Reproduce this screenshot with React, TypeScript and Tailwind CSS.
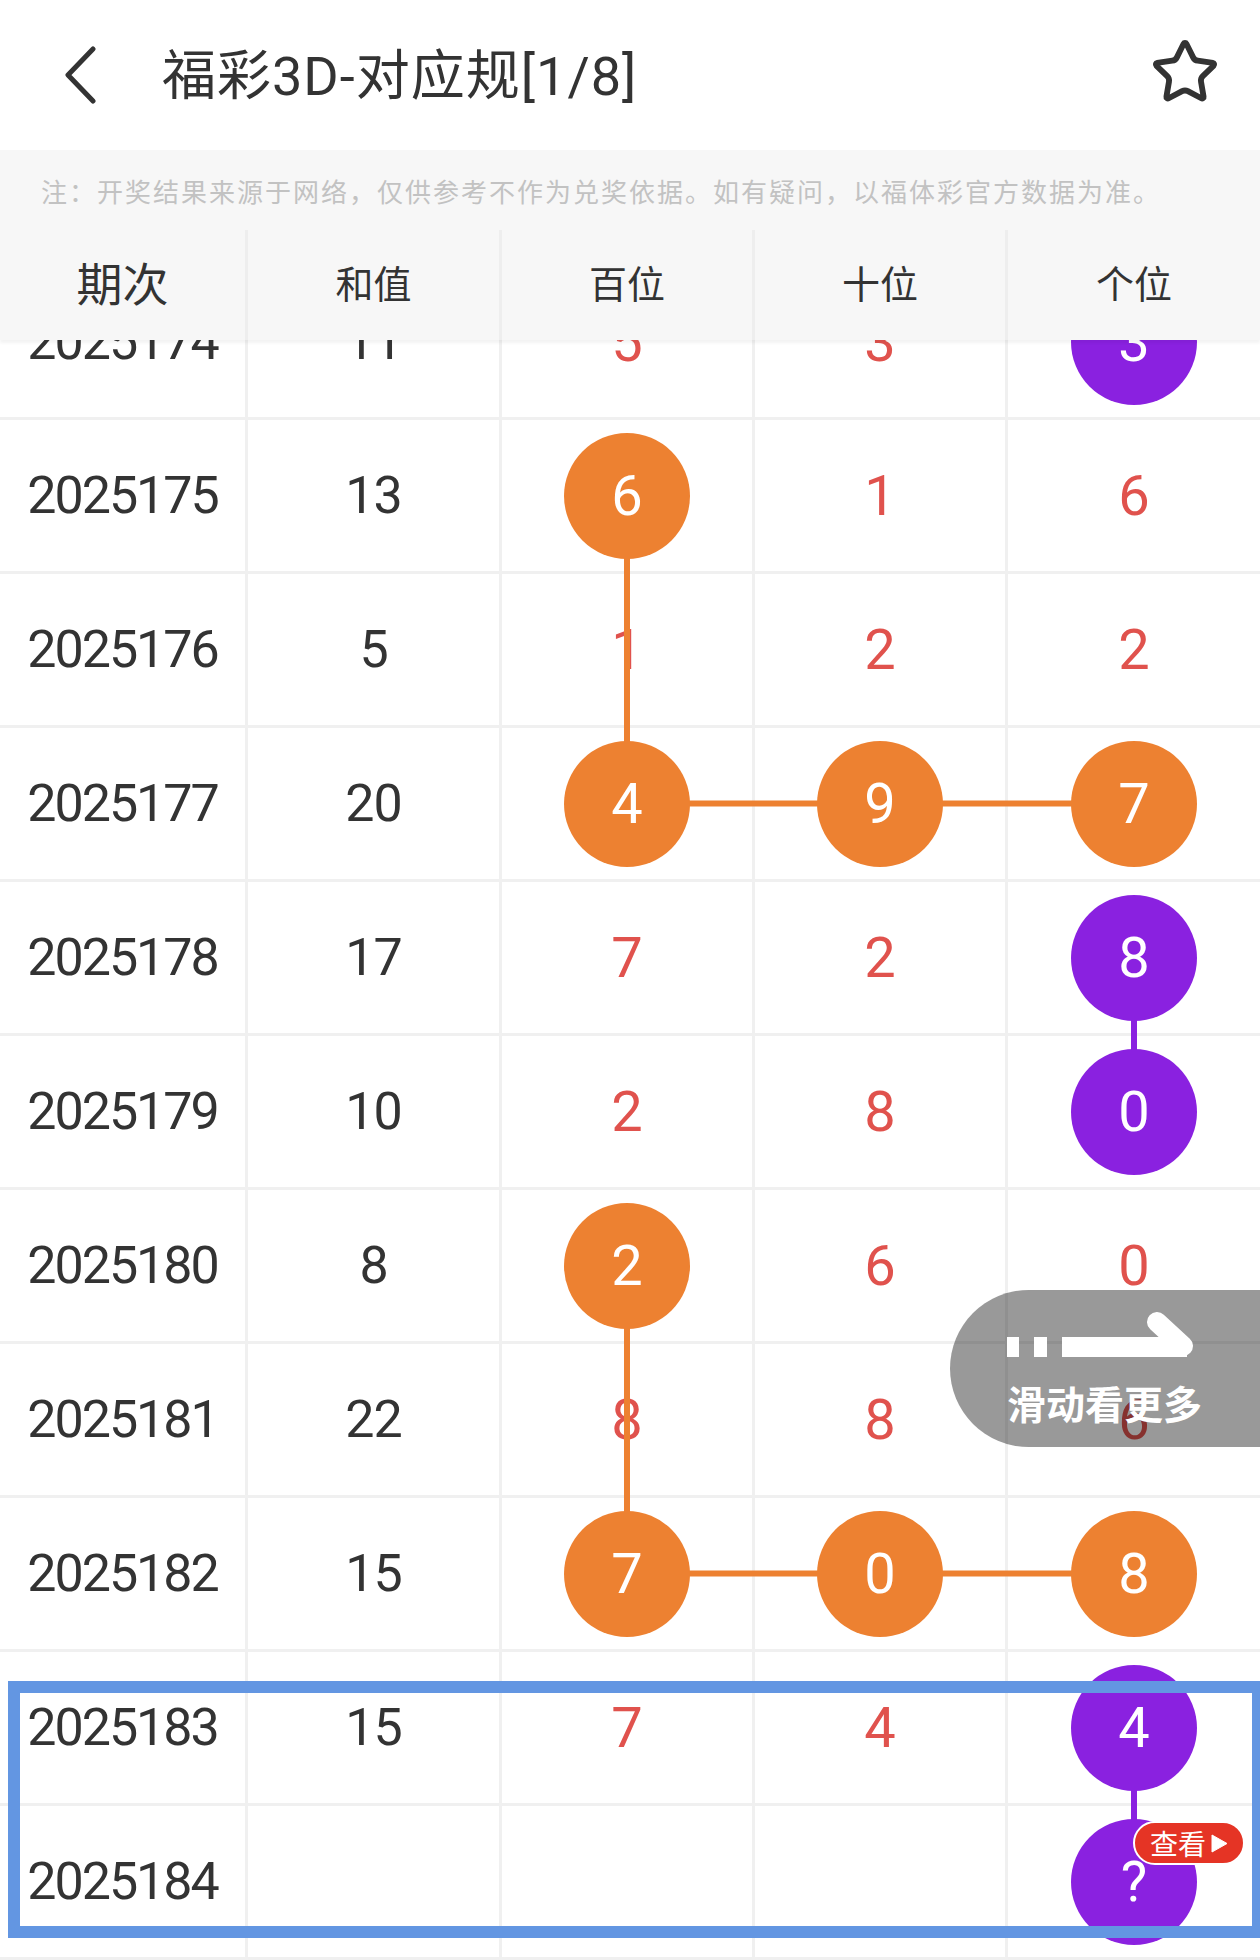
import React from "react";
import { Star } from "lucide-react";

type Cell = { v: string; c?: "o" | "p" };
type Row = { id: string; sum: string; cells: Cell[] };

const rows: Row[] = [
  { id: "2025174", sum: "11", cells: [{ v: "5" }, { v: "3" }, { v: "3", c: "p" }] },
  { id: "2025175", sum: "13", cells: [{ v: "6", c: "o" }, { v: "1" }, { v: "6" }] },
  { id: "2025176", sum: "5", cells: [{ v: "1" }, { v: "2" }, { v: "2" }] },
  { id: "2025177", sum: "20", cells: [{ v: "4", c: "o" }, { v: "9", c: "o" }, { v: "7", c: "o" }] },
  { id: "2025178", sum: "17", cells: [{ v: "7" }, { v: "2" }, { v: "8", c: "p" }] },
  { id: "2025179", sum: "10", cells: [{ v: "2" }, { v: "8" }, { v: "0", c: "p" }] },
  { id: "2025180", sum: "8", cells: [{ v: "2", c: "o" }, { v: "6" }, { v: "0" }] },
  { id: "2025181", sum: "22", cells: [{ v: "8" }, { v: "8" }, { v: "6" }] },
  { id: "2025182", sum: "15", cells: [{ v: "7", c: "o" }, { v: "0", c: "o" }, { v: "8", c: "o" }] },
  { id: "2025183", sum: "15", cells: [{ v: "7" }, { v: "4" }, { v: "4", c: "p" }] },
  { id: "2025184", sum: "", cells: [{ v: "" }, { v: "" }, { v: "?", c: "p" }] },
];

const cy = (i: number) => 75.5 + 154 * i;
const X2 = 627;
const X4 = 1134;

function Ball({ cell }: { cell: Cell }) {
  const bg = cell.c === "o" ? "bg-[#ED8131]" : "bg-[#8A21E0]";
  return (
    <div
      className={`relative z-20 flex h-[126px] w-[126px] items-center justify-center rounded-full text-[56px] leading-none text-white ${bg}`}
    >
      {cell.v}
    </div>
  );
}

export default function App() {
  return (
    <div
      className="relative h-[1960px] w-[1260px] overflow-hidden bg-white text-[#333333]"
      style={{ fontFamily: 'Roboto, "Noto Sans CJK SC", sans-serif' }}
    >
      {/* Top bar */}
      <div className="flex h-[150px] items-center">
        <svg className="ml-[64px] shrink-0" width="34" height="58" viewBox="0 0 34 58">
          <polyline
            points="29,3 4,29 29,55"
            fill="none"
            stroke="#333333"
            strokeWidth="5"
            strokeLinecap="round"
            strokeLinejoin="round"
          />
        </svg>
        <div className="ml-[64px] mt-[4px] text-[54px] leading-none tracking-[1px] text-[#333333]">
          福彩3D-对应规[1/8]
        </div>
        <div className="ml-auto mr-[40px] -mt-[6px]">
          <Star size={70} strokeWidth={2} color="#333333" />
        </div>
      </div>

      {/* Notice */}
      <div
        className="flex h-[80px] items-center bg-[#f7f7f7] pl-[41px] text-[26px] tracking-[2px] text-[#c2c2c2]"
        style={{ fontFamily: '"Noto Sans CJK SC", sans-serif' }}
      >
        注：开奖结果来源于网络，仅供参考不作为兑奖依据。如有疑问，以福体彩官方数据为准。
      </div>

      {/* Table header */}
      <div
        className="relative z-30 grid h-[110px] grid-cols-[248px_254px_253px_253px_252px] bg-[#f7f7f7] shadow-[0_3px_3px_rgba(0,0,0,0.05)]"
        style={{ fontFamily: '"Noto Sans CJK SC", sans-serif' }}
      >
        <div className="flex items-center justify-center border-r-[3px] border-[#eeeeee] pb-[8px] text-[46px]">期次</div>
        <div className="flex items-center justify-center border-r-[3px] border-[#eeeeee] pb-[8px] text-[38px]">和值</div>
        <div className="flex items-center justify-center border-r-[3px] border-[#eeeeee] pb-[8px] text-[38px]">百位</div>
        <div className="flex items-center justify-center border-r-[3px] border-[#eeeeee] pb-[8px] text-[38px]">十位</div>
        <div className="flex items-center justify-center pb-[8px] text-[38px]">个位</div>
      </div>

      {/* Body */}
      <div className="relative -mt-[74px]">
        {rows.map((r) => (
          <div key={r.id} className="grid h-[154px] grid-cols-[248px_254px_253px_253px_252px]">
            <div className="flex items-center justify-center border-r-[3px] border-b-[3px] border-[#f0f0f0] text-[52px] tracking-[-2px] text-[#333333]">
              {r.id}
            </div>
            <div className="flex items-center justify-center border-r-[3px] border-b-[3px] border-[#f0f0f0] text-[52px] tracking-[-1px] text-[#333333]">
              {r.sum}
            </div>
            {r.cells.map((c, j) => (
              <div
                key={j}
                className={`flex items-center justify-center border-b-[3px] border-[#f0f0f0] text-[56px] text-[#E0524D] ${
                  j < 2 ? "border-r-[3px]" : ""
                }`}
              >
                {c.c ? <Ball cell={c} /> : c.v}
              </div>
            ))}
          </div>
        ))}

        {/* connecting lines */}
        <svg
          className="pointer-events-none absolute left-0 top-0 z-10"
          width="1260"
          height="1694"
          viewBox="0 0 1260 1694"
        >
          <g stroke="#ED8131" strokeWidth="6">
            <line x1={X2} y1={cy(1)} x2={X2} y2={cy(3)} />
            <line x1={X2} y1={cy(3)} x2={X4} y2={cy(3)} />
            <line x1={X2} y1={cy(6)} x2={X2} y2={cy(8)} />
            <line x1={X2} y1={cy(8)} x2={X4} y2={cy(8)} />
          </g>
          <g stroke="#8A21E0" strokeWidth="6">
            <line x1={X4} y1={cy(4)} x2={X4} y2={cy(5)} />
            <line x1={X4} y1={cy(9)} x2={X4} y2={cy(10)} />
          </g>
        </svg>
      </div>

      {/* swipe hint pill */}
      <div className="absolute left-[950px] top-[1290px] z-40 flex h-[157px] w-[330px] flex-col rounded-l-full bg-[rgba(0,0,0,0.4)] pl-[57px] pt-[20px]">
        <svg width="190" height="50" viewBox="0 0 190 50">
          <rect x="0" y="27" width="12" height="20" fill="#ffffff" />
          <rect x="27" y="27" width="13" height="20" fill="#ffffff" />
          <rect x="55" y="27" width="125" height="20" fill="#ffffff" />
          <line x1="150" y1="12" x2="176" y2="36" stroke="#ffffff" strokeWidth="20" strokeLinecap="round" />
        </svg>
        <div
          className="mt-[19px] text-[39px] font-bold leading-[46px] text-white"
          style={{ fontFamily: '"Noto Sans CJK SC", sans-serif' }}
        >
          滑动看更多
        </div>
      </div>

      {/* highlight frame */}
      <div className="pointer-events-none absolute left-[8px] top-[1681px] z-40 h-[257px] w-[1256px] border-[12px] border-[#6396E2]" />

      {/* view badge */}
      <div
        className="absolute left-[1133px] top-[1821px] z-50 flex h-[44px] w-[112px] items-center justify-center gap-[5px] rounded-full border-[2.5px] border-white bg-[#E53425] text-[28px] leading-none text-white"
        style={{ fontFamily: '"Noto Sans CJK SC", sans-serif' }}
      >
        <span>查看</span>
        <svg width="17" height="19" viewBox="0 0 17 19">
          <polygon points="1,1 16,9.5 1,18" fill="#ffffff" strokeLinejoin="round" stroke="#ffffff" strokeWidth="1" />
        </svg>
      </div>
    </div>
  );
}
